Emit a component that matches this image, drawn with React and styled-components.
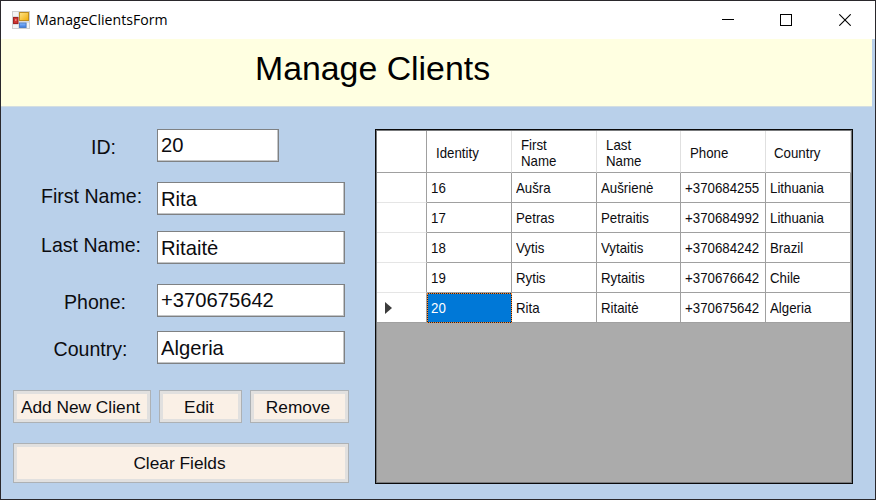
import React from "react";
import styled, { createGlobalStyle } from "styled-components";

const GlobalStyle = createGlobalStyle`
  *, *::before, *::after { box-sizing: border-box; }
  html, body { margin: 0; padding: 0; }
  body { font-family: "Liberation Sans", Arial, sans-serif; color: #0c0c10; overflow: hidden; }
`;

const Window = styled.div`
  width: 876px;
  height: 500px;
  display: flex;
  flex-direction: column;
  border: 1px solid #2a282c;
  background: #b9d0ea;
`;

const TitleBar = styled.header`
  height: 38px;
  flex: none;
  display: flex;
  align-items: center;
  background: #fff;
  padding-left: 11px;
`;

const WindowTitle = styled.span`
  width: 140px;
  margin: 0 0 2px 6px;
  font: 15px/20px "Open Sans", "Noto Sans", sans-serif;
  color: #000;
  white-space: nowrap;
  transform: scaleX(0.94);
  transform-origin: 0 50%;
`;

const Controls = styled.div`
  display: flex;
  margin-left: auto;
`;

const ControlButton = styled.button`
  width: ${(p) => p.$width}px;
  height: 38px;
  padding: 0;
  border: 0;
  background: none;
  display: flex;
  align-items: center;
  justify-content: center;
`;

const Banner = styled.div`
  height: 68px;
  flex: none;
  margin-right: 3px;
  background: #ffffe1;
  border-bottom: 1px solid #d3dee2;
  padding: 9px 0 0 254px;
`;

const Heading = styled.h1`
  margin: 0;
  font-size: 34px;
  line-height: 40px;
  font-weight: 400;
  color: #000;
  white-space: nowrap;
  transform: scaleX(0.995);
  transform-origin: 0 50%;
`;

const Body = styled.main`
  flex: 1;
  display: flex;
  align-items: flex-start;
  padding: 22px 0 0 12px;
`;

const Form = styled.form`
  width: 336px;
  flex: none;
`;

const Field = styled.div`
  display: flex;
  height: 33px;
  margin-bottom: ${(p) => p.$gap}px;
`;

const Label = styled.label`
  width: 144px;
  flex: none;
  padding-left: ${(p) => p.$indent}px;
  margin-top: ${(p) => p.$drop}px;
  height: 24px;
  font-size: 20.6px;
  line-height: 24px;
  white-space: nowrap;
  transform: scaleX(0.95);
  transform-origin: ${(p) => p.$indent}px 50%;
`;

const TextBox = styled.input`
  width: ${(p) => p.$width}px;
  height: 33px;
  padding: ${(p) => (p.$low ? "1px 3px 0" : "0 3px 1px")};
  border: 1px solid #7f8183;
  box-shadow: inset -1px -1px 0 #c3c5c7;
  background: #fff;
  font: 20.2px "Liberation Sans", Arial, sans-serif;
  color: #0c0c10;
  border-radius: 0;
  outline: 0;
`;

const ButtonRow = styled.div`
  display: grid;
  grid-template-columns: 138px 83px 99px;
  justify-content: space-between;
  margin-bottom: 20px;
`;

const FormButton = styled.button`
  width: 100%;
  height: ${(p) => p.$height}px;
  padding: 1px 3px 0 0;
  border: 1px solid #adb1b4;
  box-shadow: inset 0 0 0 3px #e1e0df;
  background: #faf0e6;
  font: 17.3px "Liberation Sans", Arial, sans-serif;
  color: #0c0c10;
  white-space: nowrap;
`;

const GridView = styled.section`
  width: 478px;
  height: 355px;
  margin-left: 26px;
  border: 1px solid #0a0a0a;
  box-shadow: inset 0 0 0 1px #77797b;
  background: #ababab;
  padding: 1px;
`;

const Table = styled.div`
  display: grid;
  grid-template-columns: 50px 85px 85px 84px 85px 85px;
  grid-template-rows: 42px repeat(5, 30px);
`;

const Cell = styled.div`
  display: flex;
  align-items: center;
  padding: 0 0 0 4px;
  background: #fff;
  border-right: 1px solid #a0a0a0;
  border-bottom: 1px solid #a0a0a0;
  font-size: 15px;
  line-height: 16px;
  white-space: nowrap;
`;

const HeaderCell = styled(Cell)`
  padding: 2px 0 0 9px;
  border-right-color: #e0e0e0;

  &:nth-child(6) {
    padding-left: 8px;
  }
`;

const CornerCell = styled(Cell)`
  border-right-color: #a0a0a0;
`;

const RowHeader = styled(Cell)`
  padding: 1px 0 0 8px;
  border-bottom-color: ${(p) => (p.$last ? "#a0a0a0" : "#e5e5e5")};
`;

const SelectedCell = styled(Cell)`
  background: #0078d7;
  color: #fff;
  box-shadow: inset 0 0 0 1px #1c2430;
  outline: 1px dotted #ff8728;
  outline-offset: -1px;
  border-width: 0;
  padding-bottom: 1px;
`;

const CellText = styled.span`
  transform: scaleX(0.885);
  transform-origin: 0 50%;
`;

const fields = [
  { id: "id", label: "ID:", value: "20", width: 122, indent: 78, drop: 6, gap: 20 },
  { id: "first", label: "First Name:", value: "Rita", width: 188, indent: 28, drop: 2, gap: 16, low: true },
  { id: "last", label: "Last Name:", value: "Ritaitė", width: 188, indent: 28, drop: 2, gap: 20, low: true },
  { id: "phone", label: "Phone:", value: "+370675642", width: 188, indent: 51, drop: 6, gap: 14 },
  { id: "country", label: "Country:", value: "Algeria", width: 188, indent: 40.5, drop: 6, gap: 26, low: true },
];

const columns = [["Identity"], ["First", "Name"], ["Last", "Name"], ["Phone"], ["Country"]];

const clients = [
  ["16", "Aušra", "Aušrienė", "+370684255", "Lithuania"],
  ["17", "Petras", "Petraitis", "+370684992", "Lithuania"],
  ["18", "Vytis", "Vytaitis", "+370684242", "Brazil"],
  ["19", "Rytis", "Rytaitis", "+370676642", "Chile"],
  ["20", "Rita", "Ritaitė", "+370675642", "Algeria"],
];

const selectedRow = 4;

function FormIcon() {
  return (
    <svg width="18" height="18" viewBox="0 0 18 18">
      <defs>
        <linearGradient id="gold" x1="0" y1="0" x2="1" y2="1">
          <stop offset="0" stopColor="#ffe58a" />
          <stop offset="1" stopColor="#f0ac08" />
        </linearGradient>
        <linearGradient id="azure" x1="0" y1="0" x2="0" y2="1">
          <stop offset="0" stopColor="#8bbcff" />
          <stop offset="1" stopColor="#3b78dc" />
        </linearGradient>
      </defs>
      <rect x="0.5" y="0.5" width="17" height="17" fill="#dcdcde" stroke="#cfcfd0" />
      <rect x="1" y="1" width="5" height="4" fill="#f4f4f4" />
      <rect x="1" y="14" width="5" height="3" fill="#f4f4f4" />
      <rect x="15" y="12" width="2" height="5" fill="#f4f4f4" />
      <rect x="7.5" y="1.5" width="9" height="8" fill="url(#gold)" stroke="#bd8d20" />
      <rect x="1.5" y="6.5" width="4.5" height="6" fill="#cf3430" stroke="#9f2323" />
      <rect x="3" y="8" width="1.5" height="2" fill="#e8807a" />
      <rect x="7.5" y="12" width="6.5" height="4.5" fill="url(#azure)" stroke="#4d7fc8" />
    </svg>
  );
}

export default function App() {
  return (
    <>
      <GlobalStyle />
      <Window>
        <TitleBar>
          <FormIcon />
          <WindowTitle>ManageClientsForm</WindowTitle>
          <Controls>
            <ControlButton type="button" aria-label="Minimize" $width={58}>
              <svg width="12" height="12" shapeRendering="crispEdges">
                <path d="M0 5.5H12" stroke="#000" />
              </svg>
            </ControlButton>
            <ControlButton type="button" aria-label="Maximize" $width={58}>
              <svg width="12" height="12" shapeRendering="crispEdges">
                <rect x="0.5" y="0.5" width="11" height="11" fill="none" stroke="#000" />
              </svg>
            </ControlButton>
            <ControlButton type="button" aria-label="Close" $width={60}>
              <svg width="12" height="12">
                <path d="M0.3 0.3L11.7 11.7M11.7 0.3L0.3 11.7" stroke="#000" strokeWidth="1.1" />
              </svg>
            </ControlButton>
          </Controls>
        </TitleBar>
        <Banner>
          <Heading>Manage Clients</Heading>
        </Banner>
        <Body>
          <Form>
            {fields.map((f) => (
              <Field key={f.id} $gap={f.gap}>
                <Label htmlFor={f.id} $indent={f.indent} $drop={f.drop}>{f.label}</Label>
                <TextBox id={f.id} defaultValue={f.value} $width={f.width} $low={f.low} spellCheck={false} />
              </Field>
            ))}
            <ButtonRow>
              <FormButton type="button" $height={33}>Add New Client</FormButton>
              <FormButton type="button" $height={33}>Edit</FormButton>
              <FormButton type="button" $height={33}>Remove</FormButton>
            </ButtonRow>
            <FormButton type="button" $height={40}>Clear Fields</FormButton>
          </Form>
          <GridView>
            <Table>
              <CornerCell />
              {columns.map((lines) => (
                <HeaderCell key={lines.join(" ")}>
                  <CellText>
                    {lines.map((line) => <div key={line}>{line}</div>)}
                  </CellText>
                </HeaderCell>
              ))}
              {clients.map((row, r) => (
                <React.Fragment key={row[0]}>
                  <RowHeader $last={r === selectedRow}>
                    {r === selectedRow && (
                      <svg width="7" height="12"><path d="M0 0L7 6L0 12Z" fill="#3c3c3c" /></svg>
                    )}
                  </RowHeader>
                  {row.map((value, c) => {
                    const Part = r === selectedRow && c === 0 ? SelectedCell : Cell;
                    return <Part key={c}><CellText>{value}</CellText></Part>;
                  })}
                </React.Fragment>
              ))}
            </Table>
          </GridView>
        </Body>
      </Window>
    </>
  );
}
